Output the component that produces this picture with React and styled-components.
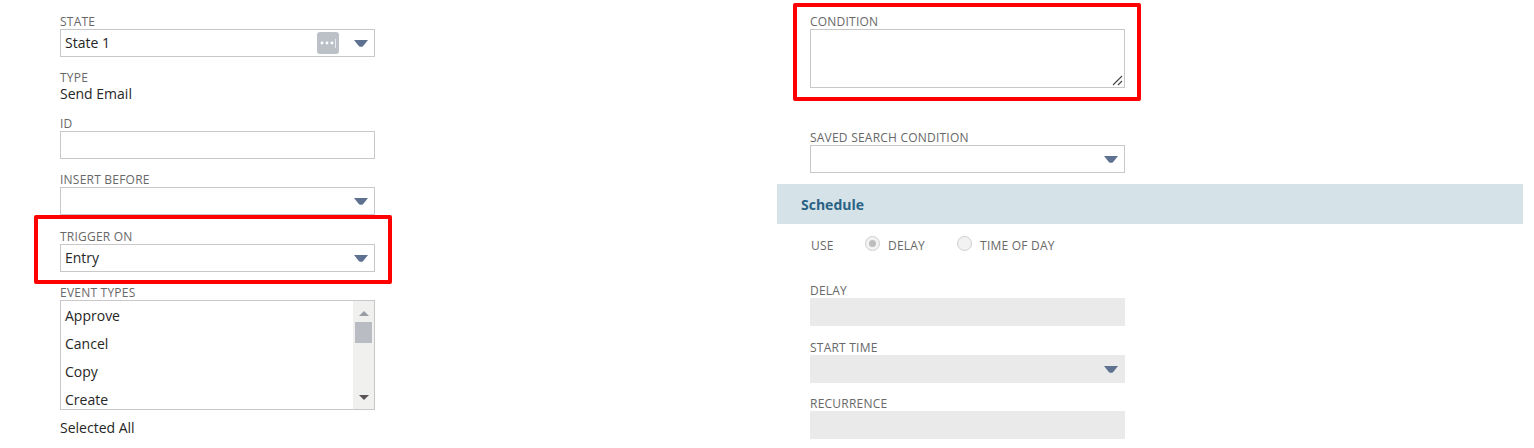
import React from "react";
import styled, { createGlobalStyle } from "styled-components";

const Global = createGlobalStyle`
  html, body { margin: 0; padding: 0; background: #fff; }
  body { font-family: "Open Sans", "Liberation Sans", sans-serif; color: #262626; }
`;

const Page = styled.div`
  display: flex;
  width: 1534px;
  height: 448px;
  overflow: hidden;
`;
const LeftColumn = styled.div`
  width: 315px;
  margin-left: 60px;
  margin-right: 402px;
  padding-top: 14px;
  flex: none;
`;
const RightColumn = styled.div`
  width: 746px;
  padding-top: 14px;
  flex: none;
`;
const Field = styled.div`
  position: relative;
  width: 315px;
  margin-top: ${(p) => p.$top || 0}px;
`;
const RightField = styled(Field)`
  margin-left: 33px;
`;
const Label = styled.div`
  font-size: 12px;
  letter-spacing: 0.22px;
  line-height: 15px;
  height: 15px;
  color: #686868;
  white-space: nowrap;
`;
const Value = styled.div`
  font-size: 14px;
  line-height: 18px;
  color: #262626;
`;
const Control = styled.div`
  box-sizing: border-box;
  display: flex;
  align-items: center;
  height: ${(p) => p.$height || 28}px;
  padding: 0 6px 0 4px;
  border: 1px solid ${(p) => (p.$disabled ? "#eaeaea" : "#c8c8c8")};
  background: ${(p) => (p.$disabled ? "#eaeaea" : "#fff")};
  font-size: 14px;
  color: #262626;
`;
const ControlText = styled.span`
  flex: 1;
  line-height: 18px;
  padding-bottom: 1px;
`;
const Caret = styled.svg`
  width: 14px;
  height: 7px;
  flex: none;
`;
const MoreButton = styled.svg`
  width: 22px;
  height: 22px;
  margin-right: 15px;
  flex: none;
`;
const TextArea = styled(Control)`
  position: relative;
`;
const Grip = styled.svg`
  position: absolute;
  right: 1px;
  bottom: 1px;
  width: 11px;
  height: 11px;
`;
const ListBox = styled.div`
  box-sizing: border-box;
  display: flex;
  height: 110px;
  border: 1px solid #c8c8c8;
  overflow: hidden;
`;
const Options = styled.div`
  flex: 1;
  padding: 1px 4px 0;
`;
const Option = styled.div`
  font-size: 14px;
  line-height: 28px;
  color: #262626;
`;
const ScrollBar = styled.div`
  width: 21px;
  display: flex;
  flex-direction: column;
  align-items: center;
  background: #f0f0ee;
  flex: none;
`;
const ScrollArrow = styled.svg`
  width: 10px;
  height: 5px;
  margin-top: ${(p) => p.$top}px;
  flex: none;
`;
const ScrollThumb = styled.div`
  width: 17px;
  height: 21px;
  margin-top: 6px;
  background: #b9bcc3;
  flex: none;
`;
const Note = styled.div`
  font-size: 14px;
  line-height: 18px;
  margin-top: 9px;
  color: #262626;
`;
const Highlight = styled.div`
  position: absolute;
  box-sizing: border-box;
  left: ${(p) => p.$l}px;
  right: ${(p) => p.$r}px;
  top: ${(p) => p.$t}px;
  bottom: ${(p) => p.$b}px;
  border: 4px solid #fe0000;
  border-radius: 2px;
  pointer-events: none;
`;
const SectionBar = styled.div`
  display: flex;
  align-items: center;
  height: 40px;
  margin-top: 11px;
  padding-left: 24px;
  background: #d5e3e8;
  font-size: 14px;
  font-weight: 700;
  color: #2a6285;
`;
const RadioRow = styled.div`
  display: flex;
  align-items: center;
  height: 18px;
  margin: 12px 0 0 34px;
  font-size: 12px;
  letter-spacing: 0.22px;
  color: #686868;
`;
const RadioLead = styled.span`
  width: 54px;
`;
const RadioItem = styled.span`
  display: flex;
  align-items: center;
  margin-right: ${(p) => p.$gap || 0}px;
`;
const RadioMark = styled.span`
  box-sizing: border-box;
  display: flex;
  align-items: center;
  justify-content: center;
  position: relative;
  top: -2px;
  width: 15px;
  height: 15px;
  margin-right: 8px;
  border: 1px solid #cfcfcf;
  border-radius: 50%;
  background: #f2f2f2;
  &::after {
    content: "";
    display: ${(p) => (p.$checked ? "block" : "none")};
    width: 7px;
    height: 7px;
    border-radius: 50%;
    background: #bdbdbd;
  }
`;

const CaretIcon = () => (
  <Caret viewBox="0 0 14 7">
    <path d="M0 0H14L9 6.2Q7 7.4 5 6.2Z" fill="#5f7191" />
  </Caret>
);

const Select = ({ value, disabled, more }) => (
  <Control $disabled={disabled}>
    <ControlText>{value}</ControlText>
    {more && (
      <MoreButton viewBox="0 0 22 22">
        <rect width="22" height="22" rx="3" fill="#bcc0c7" />
        <circle cx="5" cy="11" r="1.4" fill="#fff" />
        <circle cx="10" cy="11" r="1.4" fill="#fff" />
        <circle cx="15" cy="11" r="1.4" fill="#fff" />
        <rect x="18" y="7" width="1" height="9" fill="#e6e8ec" />
      </MoreButton>
    )}
    <CaretIcon />
  </Control>
);

export default function App() {
  return (
    <Page>
      <Global />
      <LeftColumn>
        <Field>
          <Label>STATE</Label>
          <Select value="State 1" more />
        </Field>
        <Field $top={13}>
          <Label>TYPE</Label>
          <Value>Send Email</Value>
        </Field>
        <Field $top={13}>
          <Label>ID</Label>
          <Control />
        </Field>
        <Field $top={13}>
          <Label>INSERT BEFORE</Label>
          <Select />
        </Field>
        <Field $top={14}>
          <Label>TRIGGER ON</Label>
          <Select value="Entry" />
          <Highlight $l={-26} $r={-17} $t={-14} $b={-12} />
        </Field>
        <Field $top={13}>
          <Label>EVENT TYPES</Label>
          <ListBox>
            <Options>
              <Option>Approve</Option>
              <Option>Cancel</Option>
              <Option>Copy</Option>
              <Option>Create</Option>
            </Options>
            <ScrollBar>
              <ScrollArrow $top={10} viewBox="0 0 10 5">
                <path d="M5 0L10 5H0Z" fill="#9a9ca3" />
              </ScrollArrow>
              <ScrollThumb />
              <ScrollArrow $top={52} viewBox="0 0 10 5">
                <path d="M0 0H10L5 5Z" fill="#5a5357" />
              </ScrollArrow>
            </ScrollBar>
          </ListBox>
        </Field>
        <Note>Selected All</Note>
      </LeftColumn>
      <RightColumn>
        <RightField>
          <Label>CONDITION</Label>
          <TextArea $height={59}>
            <Grip viewBox="0 0 11 11">
              <path d="M1 10L10 1M6 10L10 6" stroke="#444" strokeWidth="1.1" fill="none" />
            </Grip>
          </TextArea>
          <Highlight $l={-17} $r={-16} $t={-11} $b={-13} />
        </RightField>
        <RightField $top={42}>
          <Label>SAVED SEARCH CONDITION</Label>
          <Select />
        </RightField>
        <SectionBar>Schedule</SectionBar>
        <RadioRow>
          <RadioLead>USE</RadioLead>
          <RadioItem $gap={32}>
            <RadioMark $checked />
            DELAY
          </RadioItem>
          <RadioItem>
            <RadioMark />
            TIME OF DAY
          </RadioItem>
        </RadioRow>
        <RightField $top={29}>
          <Label>DELAY</Label>
          <Control $disabled />
        </RightField>
        <RightField $top={14}>
          <Label>START TIME</Label>
          <Select disabled />
        </RightField>
        <RightField $top={13}>
          <Label>RECURRENCE</Label>
          <Control $disabled />
        </RightField>
      </RightColumn>
    </Page>
  );
}
